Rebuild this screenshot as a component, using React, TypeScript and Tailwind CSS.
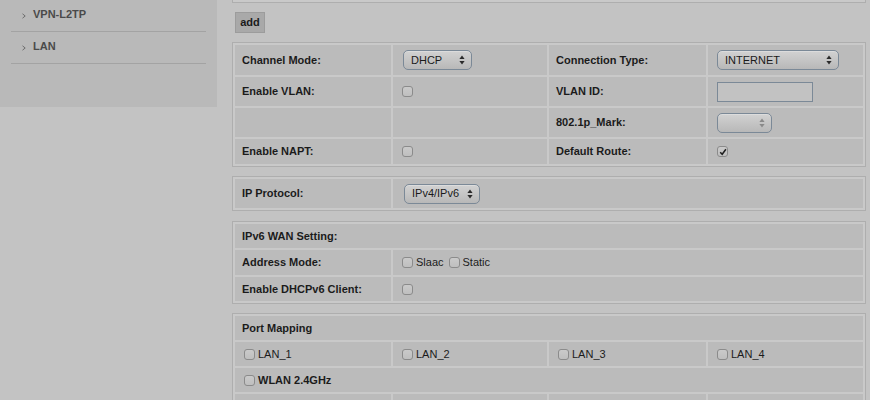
import React from "react";

function Arrows({ light }: { light?: boolean }) {
  const c = light ? "#8a8a8a" : "#2a2a2a";
  return (
    <svg width="6" height="10" viewBox="0 0 6 10">
      <path d="M3 0.5 L5.6 4 L0.4 4 Z" fill={c} />
      <path d="M3 9.5 L5.6 6 L0.4 6 Z" fill={c} />
    </svg>
  );
}

function Select({ className, text, light }: { className: string; text: string; light?: boolean }) {
  return (
    <div
      className={
        "h-[20px] rounded-[5px] border border-[#7b8997] bg-gradient-to-b from-[#d2d2d2] to-[#b8b8b8] flex items-center justify-between pl-[7px] pr-[6px] text-[11px] text-[#1a1a1a] shadow-[inset_0_1px_0_rgba(255,255,255,0.25)] " +
        className
      }
    >
      <span>{text}</span>
      <Arrows light={light} />
    </div>
  );
}

function Check({ checked }: { checked?: boolean }) {
  return (
    <span className="inline-flex w-[11px] h-[11px] shrink-0 rounded-[3px] border border-[#8b8b8b] bg-gradient-to-b from-[#cacaca] to-[#bfbfbf] items-center justify-center">
      {checked && (
        <svg width="8" height="8" viewBox="0 0 8 8">
          <path d="M1.2 4.2 L3.2 6.3 L6.9 1.2" stroke="#1e1e1e" strokeWidth="1.5" fill="none" />
        </svg>
      )}
    </span>
  );
}

const cell = "bg-[#bbbbbb] flex items-center";
const label = cell + " pl-[7px] font-bold text-[11px] text-[#1b1b1b]";
const value = cell + " pl-[9px] text-[11px] text-[#1b1b1b]";
const tbl = "border border-[#aeaeae] bg-[#c9c9c9] p-[2px] grid gap-[2px]";

function SideItem({ text }: { text: string }) {
  return (
    <div className="flex items-center pt-[8px] pb-[10px] border-b border-[#a3a3a3] leading-[13px]">
      <svg width="4" height="6" viewBox="0 0 4 6" className="ml-[11px] mt-[3px]">
        <path d="M0.5 0.8 L3.2 3 L0.5 5.2" stroke="#6e6e6e" strokeWidth="1" fill="none" />
      </svg>
      <span className="ml-[7px] font-bold text-[11px] text-[#4a4a4a]">{text}</span>
    </div>
  );
}

export default function App() {
  return (
    <div className="flex w-[870px] h-[400px] overflow-hidden bg-[#c3c3c3] font-['Liberation_Sans',Arial,sans-serif]">
      <aside className="w-[217px] shrink-0 h-[107px] bg-[#b9b9b9] px-[11px]">
        <SideItem text="VPN-L2TP" />
        <SideItem text="LAN" />
      </aside>

      <main className="ml-[15px] w-[634px] shrink-0 flex flex-col">
        <div className="h-[3px] shrink-0 border-x border-b border-[#aeaeae] bg-[#c9c9c9]" />

        <div className="mt-[9px] ml-[3px] w-[30px] h-[21px] shrink-0 bg-[#a9a9a9] border border-[#9c9c9c] flex items-center justify-center font-bold text-[11px] text-[#1b1b1b]">
          add
        </div>

        <div className={tbl + " mt-[9px] shrink-0 grid-cols-[156px_154px_157px_1fr] grid-rows-[30px_29px_29px_25px]"}>
          <div className={label}>Channel Mode:</div>
          <div className={value}>
            <Select className="w-[69px] ml-[1px]" text="DHCP" />
          </div>
          <div className={label}>Connection Type:</div>
          <div className={value}>
            <Select className="w-[122px]" text="INTERNET" />
          </div>

          <div className={label}>Enable VLAN:</div>
          <div className={value}>
            <Check />
          </div>
          <div className={label}>VLAN ID:</div>
          <div className={value}>
            <div className="w-[96px] h-[20px] border border-[#7b8997] bg-[#c2c2c2]" />
          </div>

          <div className={cell} />
          <div className={cell} />
          <div className={label}>802.1p_Mark:</div>
          <div className={value}>
            <Select className="w-[55px]" text="" light />
          </div>

          <div className={label}>Enable NAPT:</div>
          <div className={value}>
            <Check />
          </div>
          <div className={label}>Default Route:</div>
          <div className={value}>
            <Check checked />
          </div>
        </div>

        <div className={tbl + " mt-[9px] shrink-0 grid-cols-[156px_1fr] grid-rows-[29px]"}>
          <div className={label}>IP Protocol:</div>
          <div className={value}>
            <Select className="w-[76px] ml-[2px]" text="IPv4/IPv6" />
          </div>
        </div>

        <div className={tbl + " mt-[10px] shrink-0 grid-cols-[156px_1fr] grid-rows-[24px_25px_24px]"}>
          <div className={label + " col-span-2"}>IPv6 WAN Setting:</div>
          <div className={label}>Address Mode:</div>
          <div className={value}>
            <Check />
            <span className="ml-[3px]">Slaac</span>
            <span className="ml-[5px] flex">
              <Check />
            </span>
            <span className="ml-[3px]">Static</span>
          </div>
          <div className={label}>Enable DHCPv6 Client:</div>
          <div className={value}>
            <Check />
          </div>
        </div>

        <div className={tbl + " mt-[9px] shrink-0 grid-cols-[156px_154px_157px_1fr] grid-rows-[24px_24px_24px_24px]"}>
          <div className={label + " col-span-4"}>Port Mapping</div>
          {["LAN_1", "LAN_2", "LAN_3", "LAN_4"].map((t) => (
            <div key={t} className={value}>
              <Check />
              <span className="ml-[3px]">{t}</span>
            </div>
          ))}
          <div className={value + " col-span-4"}>
            <Check />
            <span className="ml-[3px] font-bold">WLAN 2.4GHz</span>
          </div>
          {[0, 1, 2, 3].map((i) => (
            <div key={i} className={value}>
              <Check />
            </div>
          ))}
        </div>
      </main>
    </div>
  );
}
